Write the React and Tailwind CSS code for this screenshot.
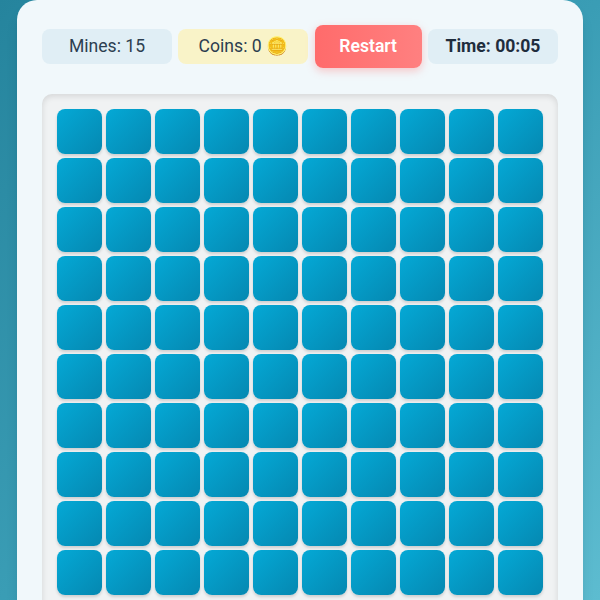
import React from 'react'

const cells = Array.from({ length: 100 }, (_, i) => i)

export default function App() {
  return (
    <div className="h-[600px] overflow-hidden bg-gradient-to-br from-[#25849d] via-[#3a9db5] to-[#5dbcd0] px-[17px] font-['Roboto','Noto_Sans',sans-serif]">
      <div className="rounded-t-[20px] bg-[#f1f8fb] px-[25px] pt-[25px] shadow-lg min-h-[620px]">
        {/* Stats */}
        <div className="flex items-center justify-between">
          <div className="flex h-[35px] w-[130px] items-center justify-center rounded-lg bg-[#e0eef5] text-[17.6px] text-[#2c3e50]">
            Mines: 15
          </div>
          <div className="flex h-[35px] w-[130px] items-center justify-center rounded-lg bg-[#f9f3c8] text-[17.6px] text-[#2c3e50]">
            Coins: 0 🪙
          </div>
          <button className="flex h-[43px] w-[107px] items-center justify-center rounded-lg bg-gradient-to-r from-[#ff6b6b] to-[#ff8080] text-[17.6px] font-semibold text-white shadow-[0_3px_8px_rgba(255,107,107,0.35)]">
            Restart
          </button>
          <div className="flex h-[35px] w-[130px] items-center justify-center rounded-lg bg-[#e0eef5] text-[17.6px] font-bold text-[#1f2d3d]">
            Time: 00:05
          </div>
        </div>

        {/* Board */}
        <div className="mt-[26px] rounded-[10px] bg-[#f0f2f3] p-[15px] shadow-[inset_0_2px_6px_rgba(0,0,0,0.12)]">
          <div className="grid grid-cols-[repeat(10,45px)] gap-[4px]">
            {cells.map((i) => (
              <div
                key={i}
                className="h-[45px] w-[45px] rounded-[8px] bg-gradient-to-br from-[#04a9d6] to-[#0588b1] shadow-[0_2px_3px_rgba(0,0,0,0.15)]"
              />
            ))}
          </div>
        </div>
      </div>
    </div>
  )
}
